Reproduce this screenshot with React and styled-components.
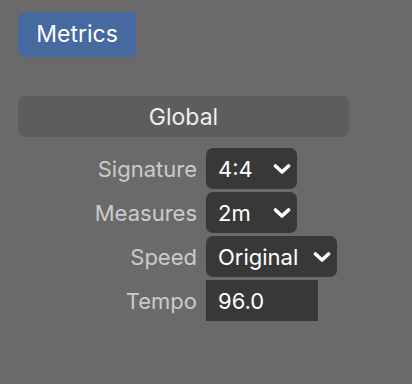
import React from 'react';
import styled, { createGlobalStyle } from 'styled-components';

const GlobalStyle = createGlobalStyle`
  html, body {
    margin: 0;
    padding: 0;
    background: #6a6a6a;
  }
  body {
    font-family: Inter, "Liberation Sans", sans-serif;
    -webkit-font-smoothing: antialiased;
  }
`;

const Page = styled.div`
  width: 412px;
  height: 384px;
  box-sizing: border-box;
  padding: 12px 0 0 18px;
  background: #6a6a6a;
`;

const Tab = styled.div`
  display: inline-flex;
  align-items: center;
  justify-content: center;
  width: 118px;
  height: 45px;
  box-sizing: border-box;
  background: #4669a0;
  color: #fff;
  font-size: 23px;
  border-radius: 9px 0 0 9px;
  padding-bottom: 2px;
`;

const Section = styled.div`
  width: 331px;
  height: 41px;
  margin-top: 39px;
  display: flex;
  align-items: center;
  justify-content: center;
  background: #5d5d5d;
  border-radius: 7px;
  color: #eeeeee;
  font-size: 23px;
`;

const Form = styled.div`
  display: grid;
  grid-template-columns: 179px auto;
  column-gap: 9px;
  row-gap: 3px;
  margin-top: 11px;
  align-items: center;
`;

const Label = styled.div`
  text-align: right;
  color: #cbcbcb;
  font-size: 22px;
`;

const Field = styled.div`
  display: flex;
  align-items: center;
  justify-content: space-between;
  box-sizing: border-box;
  height: 41px;
  width: ${p => p.$w}px;
  padding: 0 6px 0 12px;
  background: #383838;
  border-radius: ${p => (p.$square ? 0 : 7)}px;
  color: #fff;
  font-size: 22px;
`;

const Chevron = () => (
  <svg width="18" height="12" viewBox="0 0 18 12">
    <path
      d="M2.5 3 L9 9 L15.5 3"
      fill="none"
      stroke="#fff"
      strokeWidth="3.6"
      strokeLinecap="round"
      strokeLinejoin="round"
    />
  </svg>
);

const rows = [
  { label: 'Signature', value: '4:4', w: 91, select: true },
  { label: 'Measures', value: '2m', w: 91, select: true },
  { label: 'Speed', value: 'Original', w: 131, select: true },
  { label: 'Tempo', value: '96.0', w: 112, select: false },
];

export default function App() {
  return (
    <Page>
      <GlobalStyle />
      <Tab>Metrics</Tab>
      <Section>Global</Section>
      <Form>
        {rows.map(r => (
          <React.Fragment key={r.label}>
            <Label>{r.label}</Label>
            <Field $w={r.w} $square={!r.select}>
              <span>{r.value}</span>
              {r.select && <Chevron />}
            </Field>
          </React.Fragment>
        ))}
      </Form>
    </Page>
  );
}
